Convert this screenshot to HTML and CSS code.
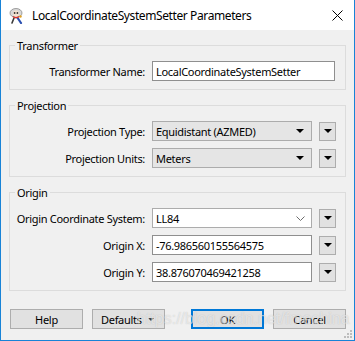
FILE: index.html
```html
<!DOCTYPE html>
<html lang="en">
<head>
    <meta charset="UTF-8">
    <meta name="viewport" content="width=device-width, initial-scale=1.0">
    <title>LocalCoordinateSystemSetter Parameters</title>
    <link rel="stylesheet" href="styles.css">
</head>
<body>
    <div class="window">
        <div class="titlebar">
            <svg class="app-icon" width="16" height="17" viewBox="0 0 16 17">
                <path d="M9 10 L13 16" stroke="#2a4fb0" stroke-width="2.2" stroke-linecap="round"/>
                <path d="M6 11 L4 16" stroke="#3a3a3a" stroke-width="1.6" stroke-linecap="round"/>
                <ellipse cx="8" cy="6" rx="6" ry="4.5" fill="#d8d8d8" stroke="#8a8a8a" stroke-width="0.8"/>
                <circle cx="8" cy="6.5" r="3" fill="#f4e2cf"/>
                <circle cx="6.6" cy="6" r="0.9" fill="#333"/>
                <circle cx="9.4" cy="6" r="0.9" fill="#333"/>
                <path d="M5 9.5 Q8 12 11 9.5" stroke="#d9342b" stroke-width="1.6" fill="none"/>
                <circle cx="12.5" cy="9.5" r="1.2" fill="#e0a020"/>
            </svg>
            <span class="title">LocalCoordinateSystemSetter Parameters</span>
            <svg class="close" width="11" height="11" viewBox="0 0 11 11">
                <path d="M0.5 0.5 L10.5 10.5 M10.5 0.5 L0.5 10.5" stroke="#000" stroke-width="1"/>
            </svg>
        </div>

        <div class="content">
            <fieldset class="group">
                <legend>Transformer</legend>
                <div class="rows">
                    <label>Transformer Name:</label>
                    <div class="field text wide">LocalCoordinateSystemSetter</div>
                </div>
            </fieldset>

            <fieldset class="group">
                <legend>Projection</legend>
                <div class="rows">
                    <label>Projection Type:</label>
                    <div class="field select">Equidistant (AZMED)<span class="tri"></span></div>
                    <div class="menu-btn"><span class="tri"></span></div>

                    <label>Projection Units:</label>
                    <div class="field select">Meters<span class="tri"></span></div>
                    <div class="menu-btn"><span class="tri"></span></div>
                </div>
            </fieldset>

            <fieldset class="group">
                <legend>Origin</legend>
                <div class="rows">
                    <label>Origin Coordinate System:</label>
                    <div class="field text combo">LL84
                        <svg class="chev" width="9" height="5" viewBox="0 0 9 5"><path d="M0.5 0.5 L4.5 4.5 L8.5 0.5" stroke="#6d6d6d" fill="none"/></svg>
                    </div>
                    <div class="menu-btn"><span class="tri"></span></div>

                    <label>Origin X:</label>
                    <div class="field text">-76.986560155564575</div>
                    <div class="menu-btn"><span class="tri"></span></div>

                    <label>Origin Y:</label>
                    <div class="field text">38.876070469421258</div>
                    <div class="menu-btn"><span class="tri"></span></div>
                </div>
            </fieldset>

            <div class="buttons">
                <div class="btn-group">
                    <button class="btn">Help</button>
                    <button class="btn defaults">Defaults <span class="tri small"></span></button>
                </div>
                <div class="btn-group">
                    <button class="btn primary">OK</button>
                    <button class="btn">Cancel</button>
                </div>
            </div>
        </div>

        <div class="watermark">https://blog.csdn.net/fmechina</div>
        <svg class="grip" width="9" height="9" viewBox="0 0 9 9">
            <rect x="6" y="0" width="2" height="2" fill="#bdbdbd"/>
            <rect x="3" y="3" width="2" height="2" fill="#bdbdbd"/>
            <rect x="6" y="3" width="2" height="2" fill="#bdbdbd"/>
            <rect x="0" y="6" width="2" height="2" fill="#bdbdbd"/>
            <rect x="3" y="6" width="2" height="2" fill="#bdbdbd"/>
            <rect x="6" y="6" width="2" height="2" fill="#bdbdbd"/>
        </svg>
    </div>
</body>
</html>
```

FILE: styles.css
```css
body {
    margin: 0;
    font-family: 'Noto Sans', 'Open Sans', sans-serif;
    font-size: 11px;
    letter-spacing: -0.3px;
    color: #000;
    background-color: #f0f0f0;
}

.window {
    position: relative;
    width: 355px;
    height: 341px;
    box-sizing: border-box;
    border: 1px solid #1883d7;
    border-top: none;
    background-color: #f0f0f0;
    overflow: hidden;
}

.titlebar {
    height: 30px;
    background-color: #fff;
    display: flex;
    align-items: center;
    padding-left: 7px;
}

.app-icon {
    margin-right: 8px;
    margin-top: 1px;
}

.title {
    font-size: 12px;
    letter-spacing: -0.4px;
    flex: 1;
}

.close {
    margin-right: 11px;
}

.content {
    padding: 8px 8px 0 8px;
}

.group {
    margin: 0 0 8px 0;
    padding: 8px 9px 8px 0;
    border: 1px solid #dcdcdc;
    min-width: 0;
}

.group legend {
    margin-left: 5px;
    padding: 0 2px;
    line-height: 15px;
}

.rows {
    display: grid;
    grid-template-columns: 1fr 160px 17px;
    column-gap: 7px;
    row-gap: 7px;
    align-items: center;
}

.rows label {
    text-align: right;
    white-space: nowrap;
}

.field {
    height: 20px;
    box-sizing: border-box;
    display: flex;
    align-items: center;
    padding-left: 3px;
    white-space: nowrap;
    overflow: hidden;
}

.field.text {
    background-color: #fff;
    border: 1px solid #8f8f8f;
}

.field.wide {
    grid-column: 2 / 4;
    margin-right: 1px;
}

.field.select {
    background-color: #e5e5e5;
    border: 1px solid #acacac;
    justify-content: space-between;
    padding-right: 7px;
}

.field.combo {
    justify-content: space-between;
    padding-right: 6px;
    border-color: #acacac;
}

.menu-btn {
    height: 19px;
    box-sizing: border-box;
    background-color: #e1e1e1;
    border: 1px solid #adadad;
    display: flex;
    align-items: center;
    justify-content: center;
}

.tri {
    width: 0;
    height: 0;
    border-left: 4px solid transparent;
    border-right: 4px solid transparent;
    border-top: 4px solid #000;
}

.tri.small {
    border-left-width: 3px;
    border-right-width: 3px;
    border-top: 3px solid #444;
    margin-left: 6px;
}

.buttons {
    display: flex;
    justify-content: space-between;
    margin-top: 18px;
    padding: 0 0 0 1px;
}

.btn-group {
    display: flex;
    gap: 9px;
}

.btn {
    width: 73px;
    height: 20px;
    box-sizing: border-box;
    background-color: #e1e1e1;
    border: 1px solid #adadad;
    font-family: inherit;
    font-size: 11px;
    letter-spacing: -0.3px;
    color: #000;
    padding: 0;
    display: flex;
    align-items: center;
    justify-content: center;
}

.btn.defaults {
    justify-content: flex-start;
    padding-left: 8px;
}

.btn.primary {
    border: 2px solid #0078d7;
}

.watermark {
    position: absolute;
    left: 136px;
    top: 310px;
    font-family: 'Liberation Sans', Arial, sans-serif;
    font-size: 16px;
    letter-spacing: 0;
    color: rgba(255, 255, 255, 0.55);
    text-shadow: 0 0 1px rgba(110, 110, 110, 0.35);
    pointer-events: none;
}

.grip {
    position: absolute;
    right: 1px;
    bottom: 1px;
}
```
